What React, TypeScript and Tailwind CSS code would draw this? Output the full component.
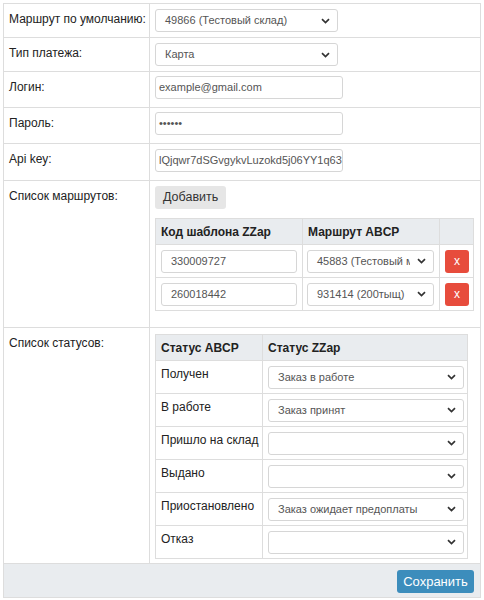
import React from "react";

type FieldProps = { value: string; className: string; textClass?: string };

const FakeSelect = ({ value, className, textClass }: FieldProps) => (
  <div
    className={
      "flex h-[23px] items-center rounded-[3px] border border-[#d6d6d6] bg-white " + className
    }
  >
    <span
      className={
        "min-w-0 flex-1 overflow-hidden whitespace-nowrap text-[11px] leading-[21px] text-[#555] " +
        (textClass ?? "pl-[9px]")
      }
    >
      {value}
    </span>
    <svg className="mx-[7px] shrink-0" width="9" height="6" viewBox="0 0 9 6">
      <path d="M1 1.2 L4.5 4.6 L8 1.2" fill="none" stroke="#333" strokeWidth="1.7" />
    </svg>
  </div>
);

const TextInput = ({ value, className, textClass }: FieldProps) => (
  <div
    className={
      "h-[23px] overflow-hidden whitespace-nowrap rounded-[3px] border border-[#d6d6d6] bg-white leading-[21px] text-[#555] " +
      className +
      " " +
      (textClass ?? "pl-[3px] text-[11px]")
    }
  >
    {value}
  </div>
);

const Label = ({ children }: { children: React.ReactNode }) => (
  <td className="whitespace-nowrap border border-[#ddd] px-[5px] pt-[7px] align-top text-[12px] leading-[16px] text-[#222]">
    {children}
  </td>
);

const routes = [
  { code: "330009727", route: "45883 (Тестовый маршрут)" },
  { code: "260018442", route: "931414 (200тыщ)" },
];

const statuses = [
  { abcp: "Получен", zzap: "Заказ в работе" },
  { abcp: "В работе", zzap: "Заказ принят" },
  { abcp: "Пришло на склад", zzap: "" },
  { abcp: "Выдано", zzap: "" },
  { abcp: "Приостановлено", zzap: "Заказ ожидает предоплаты" },
  { abcp: "Отказ", zzap: "" },
];

export default function App() {
  return (
    <div className="h-[600px] w-[484px] bg-white pl-[3px] pt-[3px] font-['Liberation_Sans',Arial,sans-serif]">
      <table className="w-[478px] table-fixed border-collapse border border-[#ddd]">
        <colgroup>
          <col className="w-[146px]" />
          <col />
        </colgroup>
        <tbody>
          <tr className="h-[34px]">
            <Label>Маршрут по умолчанию:</Label>
            <td className="border border-[#ddd] px-[5px]">
              <FakeSelect value="49866 (Тестовый склад)" className="w-[183px]" />
            </td>
          </tr>
          <tr className="h-[34px]">
            <Label>Тип платежа:</Label>
            <td className="border border-[#ddd] px-[5px]">
              <FakeSelect value="Карта" className="w-[183px]" />
            </td>
          </tr>
          <tr className="h-[36px]">
            <Label>Логин:</Label>
            <td className="border border-[#ddd] px-[5px] pt-[4px] align-top">
              <TextInput value="example@gmail.com" className="w-[188px]" />
            </td>
          </tr>
          <tr className="h-[36px]">
            <Label>Пароль:</Label>
            <td className="border border-[#ddd] px-[5px] pt-[4px] align-top">
              <TextInput
                value="••••••"
                className="w-[188px]"
                textClass="pl-[3px] text-[11px]"
              />
            </td>
          </tr>
          <tr className="h-[37px]">
            <Label>Api key:</Label>
            <td className="border border-[#ddd] px-[5px] pt-[5px] align-top">
              <TextInput value="lQjqwr7dSGvgykvLuzokd5j06YY1q63" className="w-[188px]" />
            </td>
          </tr>
          <tr className="h-[147px]">
            <Label>Список маршрутов:</Label>
            <td className="border border-[#ddd] px-[5px] pt-[5px] align-top">
              <button className="block h-[23px] rounded-[3px] bg-[#e6e6e6] px-[8px] text-[12.5px] leading-[23px] text-[#333]">
                Добавить
              </button>
              <table className="mt-[9px] w-[319px] table-fixed border-collapse border border-[#ddd] text-[12px]">
                <colgroup>
                  <col className="w-[147px]" />
                  <col className="w-[137px]" />
                  <col />
                </colgroup>
                <thead>
                  <tr className="h-[26px] bg-[#e9ecef]">
                    <th className="border border-[#ddd] px-[5px] text-left font-bold text-[#222]">
                      Код шаблона ZZap
                    </th>
                    <th className="border border-[#ddd] px-[5px] text-left font-bold text-[#222]">
                      Маршрут ABCP
                    </th>
                    <th className="border border-[#ddd]"></th>
                  </tr>
                </thead>
                <tbody>
                  {routes.map((r) => (
                    <tr key={r.code} className="h-[33px]">
                      <td className="border border-[#ddd] px-[5px]">
                        <TextInput
                          value={r.code}
                          className="w-[136px]"
                          textClass="pl-[9px] text-[11px]"
                        />
                      </td>
                      <td className="border border-[#ddd] px-[4px]">
                        <FakeSelect value={r.route} className="w-[127px]" />
                      </td>
                      <td className="border border-[#ddd] px-[5px]">
                        <button className="block h-[23px] w-[24px] rounded-[3px] bg-[#e74c3c] text-[12px] leading-[22px] text-white">
                          x
                        </button>
                      </td>
                    </tr>
                  ))}
                </tbody>
              </table>
            </td>
          </tr>
          <tr className="h-[236px]">
            <Label>Список статусов:</Label>
            <td className="border border-[#ddd] px-[5px] pt-[6px] align-top">
              <table className="w-[313px] table-fixed border-collapse border border-[#ddd] text-[12px]">
                <colgroup>
                  <col className="w-[107px]" />
                  <col />
                </colgroup>
                <thead>
                  <tr className="h-[26px] bg-[#e9ecef]">
                    <th className="border border-[#ddd] px-[5px] text-left font-bold text-[#222]">
                      Статус ABCP
                    </th>
                    <th className="border border-[#ddd] px-[5px] text-left font-bold text-[#222]">
                      Статус ZZap
                    </th>
                  </tr>
                </thead>
                <tbody>
                  {statuses.map((s) => (
                    <tr key={s.abcp} className="h-[33px]">
                      <td className="whitespace-nowrap border border-[#ddd] px-[5px] pt-[5px] align-top leading-[16px] text-[#222]">
                        {s.abcp}
                      </td>
                      <td className="border border-[#ddd] px-[5px]">
                        <FakeSelect value={s.zzap} className="w-[196px]" />
                      </td>
                    </tr>
                  ))}
                </tbody>
              </table>
            </td>
          </tr>
          <tr className="h-[34px] bg-[#e9ecef]">
            <td colSpan={2} className="border border-[#ddd] px-[6px] text-right">
              <button className="h-[23px] w-[77px] rounded-[3px] bg-[#3c8dbc] text-[13px] leading-[23px] text-white">
                Сохранить
              </button>
            </td>
          </tr>
        </tbody>
      </table>
    </div>
  );
}
